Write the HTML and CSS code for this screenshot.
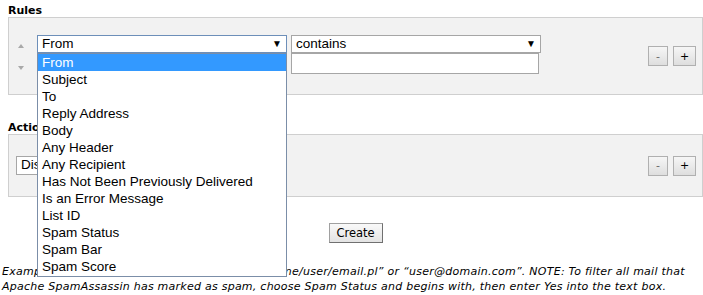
FILE: index.html
```html
<!DOCTYPE html>
<html lang="en">
<head>
  <meta charset="UTF-8">
  <title>Filters</title>
  <link rel="stylesheet" href="styles.css">
</head>
<body>
  <h3>Rules</h3>
  <div class="panel rules">
    <div class="sorter">
      <span class="arrow up"></span>
      <span class="arrow down"></span>
    </div>
    <div class="rule">
      <div class="rule-top">
        <div class="select part focus">
          <span>From</span><span class="caret">&#9660;</span>
          <ul class="menu">
            <li class="on">From</li>
            <li>Subject</li>
            <li>To</li>
            <li>Reply Address</li>
            <li>Body</li>
            <li>Any Header</li>
            <li>Any Recipient</li>
            <li>Has Not Been Previously Delivered</li>
            <li>Is an Error Message</li>
            <li>List ID</li>
            <li>Spam Status</li>
            <li>Spam Bar</li>
            <li>Spam Score</li>
          </ul>
        </div>
        <div class="select match"><span>contains</span><span class="caret">&#9660;</span></div>
      </div>
      <input class="val" type="text">
    </div>
    <div class="btns">
      <button class="small">-</button>
      <button class="small plus">+</button>
    </div>
  </div>

  <h3 class="actions-title">Actions</h3>
  <div class="panel actions">
    <div class="select action"><span>Discard</span><span class="caret">&#9660;</span></div>
    <div class="btns">
      <button class="small">-</button>
      <button class="small plus">+</button>
    </div>
  </div>

  <div class="create-row">
    <button class="create">Create</button>
  </div>

  <p class="note">Examples: &ldquo;Pipe to a Program&rdquo; then type in &ldquo;/home/user/email.pl&rdquo; or &ldquo;user@domain.com&rdquo;. NOTE: To filter all mail that Apache SpamAssassin has marked as spam, choose Spam Status and begins with, then enter Yes into the text box.</p>
</body>
</html>
```

FILE: styles.css
```css
body {
  margin: 0;
  font-family: "DejaVu Sans", Verdana, sans-serif;
  font-size: 11px;
  color: #000;
  background: #fff;
}

h3 {
  margin: 0;
  padding: 4px 0 0 8px;
  height: 13px;
  font-size: 11px;
  font-weight: bold;
}

.actions-title {
  margin-top: 25px;
  padding-top: 1px;
  height: 13px;
}

.panel {
  margin-left: 8px;
  background: #f2f2f2;
  border: 1px solid #cfcfcf;
  display: flex;
  align-items: center;
}

.rules {
  height: 76px;
  padding: 0 6px 0 9px;
}

.actions {
  height: 61px;
  padding: 0 6px 0 7px;
}

.sorter {
  width: 19px;
  height: 40px;
  display: flex;
  flex-direction: column;
  justify-content: space-between;
  padding-top: 8px;
  box-sizing: border-box;
}

.arrow {
  width: 0;
  height: 0;
  border-left: 3.5px solid transparent;
  border-right: 3.5px solid transparent;
}

.arrow.up {
  border-bottom: 4px solid #a9a9a9;
}

.arrow.down {
  border-top: 4px solid #a9a9a9;
  margin-bottom: 6px;
}

.rule {
  flex: 1;
  margin-top: -4px;
}

.rule-top {
  display: flex;
  gap: 4px;
}

.select {
  position: relative;
  height: 18px;
  box-sizing: border-box;
  background: #fff;
  border: 1px solid #a6a6a6;
  font-family: "Liberation Sans", Arial, sans-serif;
  font-size: 13.5px;
  line-height: 16px;
  padding-left: 4px;
  display: flex;
  justify-content: space-between;
  white-space: nowrap;
}

.select.focus {
  border-color: #6d8fb9;
}

.caret {
  font-size: 10px;
  width: 14px;
  text-align: left;
}

.part {
  width: 250px;
}

.match {
  width: 250px;
}

.action {
  width: 100px;
  height: 19px;
  margin-top: -1px;
}

.val {
  display: block;
  margin: 0 0 0 254px;
  width: 248px;
  height: 21px;
  box-sizing: border-box;
  border: 1px solid #a6a6a6;
  background: #fff;
  padding: 0;
}

.btns {
  margin-left: auto;
  display: flex;
  gap: 5px;
}

.small {
  width: 20px;
  height: 20px;
  padding: 0;
  border: 1px solid #b0b0b0;
  background: linear-gradient(#f6f6f6, #dedede);
  font-family: "DejaVu Sans", Verdana, sans-serif;
  font-size: 11px;
  color: #666;
}

.small.plus {
  width: 23px;
  color: #000;
}

.menu {
  position: absolute;
  left: -1px;
  top: 17px;
  width: 250px;
  margin: 0;
  padding: 0 0 1px;
  list-style: none;
  background: #fff;
  border: 1px solid #7b8ea8;
  box-sizing: border-box;
  z-index: 2;
}

.menu li {
  height: 17px;
  line-height: 17px;
  padding-left: 4px;
}

.menu li.on {
  background: #3399ff;
  color: #fff;
}

.create-row {
  margin-left: 8px;
  padding-top: 26px;
  display: flex;
  justify-content: center;
}

.create {
  height: 20px;
  width: 54px;
  padding: 0;
  border: 1px solid #a0a0a0;
  border-right-color: #707070;
  border-bottom-color: #707070;
  background: linear-gradient(#f9f9f9, #e3e3e3);
  font-family: "DejaVu Sans", Verdana, sans-serif;
  font-size: 11.5px;
  color: #000;
}

.note {
  margin: 21px 0 0 2px;
  font-style: italic;
  font-size: 11px;
  line-height: 15px;
  letter-spacing: 0.25px;
  color: #000;
}
```
